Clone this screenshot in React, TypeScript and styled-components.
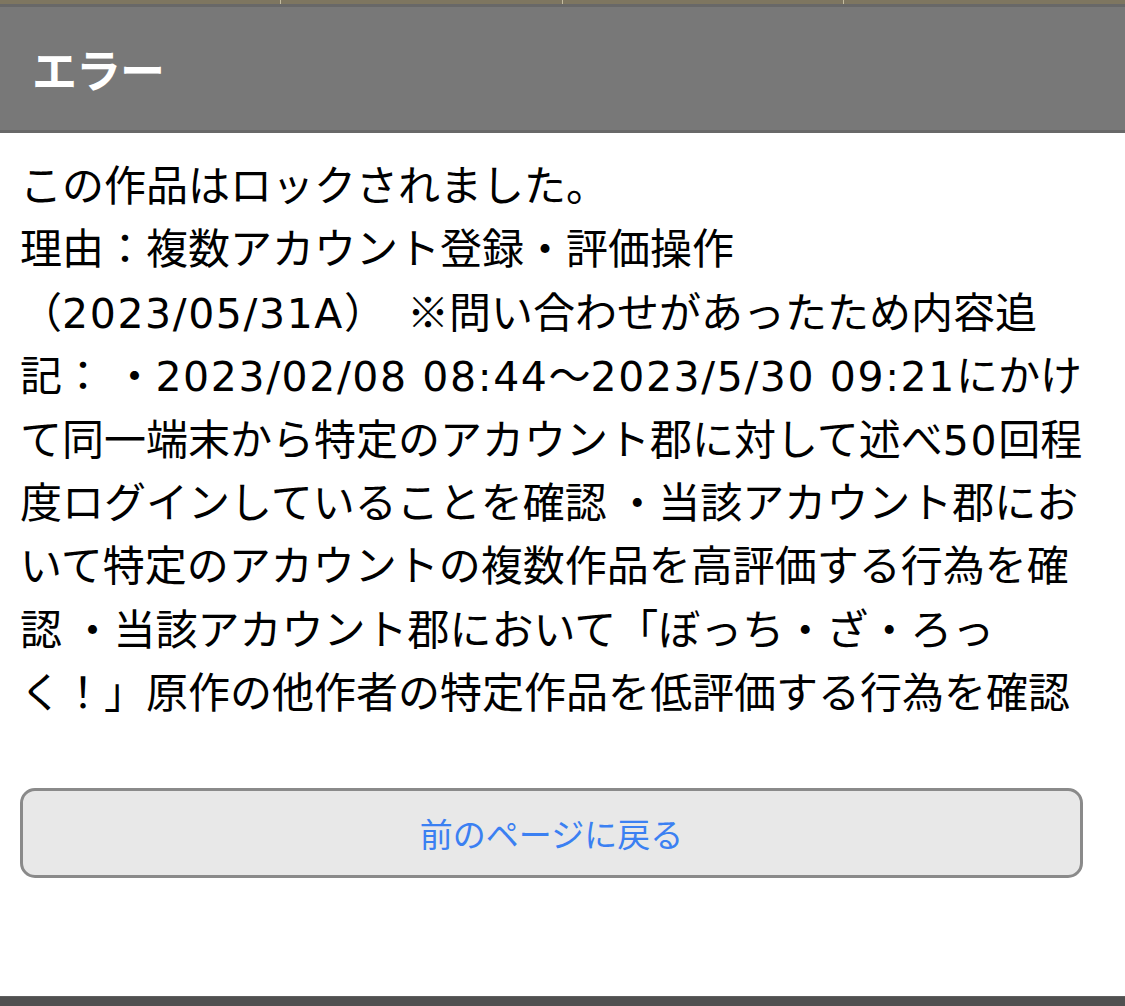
import styled, {createGlobalStyle} from 'styled-components';

const GlobalStyle = createGlobalStyle`
  html, body {
    margin: 0;
    padding: 0;
    background: #fff;
  }
  body {
    font-family: "Noto Sans CJK JP", sans-serif;
  }
`;

const Page = styled.div`
  width: 1125px;
  height: 1006px;
  display: flex;
  flex-direction: column;
  overflow: hidden;
`;

const TabStrip = styled.div`
  display: grid;
  grid-template-columns: repeat(4, 1fr);
  height: 4px;
  background: #7e7660;
  border-bottom: 3px solid #686868;
`;

const Tab = styled.div`
  border-right: 1px solid #c4bca0;

  &:last-child {
    border-right: none;
  }
`;

const Header = styled.header`
  height: 123px;
  display: flex;
  align-items: center;
  padding-left: 32px;
  background: #787878;
  border-bottom: 3px solid #686868;
`;

const Title = styled.h1`
  margin: 0;
  font-size: 45px;
  font-weight: 700;
  color: #fff;
  letter-spacing: -1px;
`;

const Content = styled.main`
  flex: 1;
  padding: 18px 0 0 20px;
`;

const Message = styled.p`
  margin: 0;
  font-size: 42px;
  line-height: 63.4px;
  color: #000;
`;

const Line = styled.span`
  display: block;
  height: 63.4px;
  white-space: nowrap;
`;

// latin runs (dates, counts) are wider in the original than in the CJK font
const Num = styled.span`
  font-family: "DejaVu Sans", "Liberation Sans", sans-serif;
  font-size: 41px;
  line-height: 1;
  letter-spacing: 1.6px;
`;

const BackButton = styled.button`
  display: block;
  box-sizing: border-box;
  width: 1063px;
  height: 90px;
  margin-top: 66px;
  border: 3px solid #8a8a8a;
  border-radius: 15px;
  background: #e8e8e8;
  color: #3b80f2;
  font-family: "Noto Sans CJK JP", sans-serif;
  font-size: 33px;
  cursor: pointer;
`;

const Footer = styled.footer`
  height: 9px;
  background: #505050;
  border-top: 1px solid #5e5e5e;
`;

export default function App() {
  return (
    <Page>
      <GlobalStyle />
      <TabStrip>
        <Tab />
        <Tab />
        <Tab />
        <Tab />
      </TabStrip>
      <Header>
        <Title>エラー</Title>
      </Header>
      <Content>
        <Message>
          <Line>この作品はロックされました。</Line>
          <Line>理由：複数アカウント登録・評価操作</Line>
          <Line>（<Num>2023/05/31A</Num>）　※問い合わせがあったため内容追</Line>
          <Line>記： ・<Num>2023/02/08 08:44</Num>〜<Num>2023/5/30 09:21</Num>にかけ</Line>
          <Line>て同一端末から特定のアカウント郡に対して述べ<Num>50</Num>回程</Line>
          <Line>度ログインしていることを確認 ・当該アカウント郡にお</Line>
          <Line>いて特定のアカウントの複数作品を高評価する行為を確</Line>
          <Line>認 ・当該アカウント郡において「ぼっち・ざ・ろっ</Line>
          <Line>く！」原作の他作者の特定作品を低評価する行為を確認</Line>
        </Message>
        <BackButton type="button">前のページに戻る</BackButton>
      </Content>
      <Footer />
    </Page>
  );
}
